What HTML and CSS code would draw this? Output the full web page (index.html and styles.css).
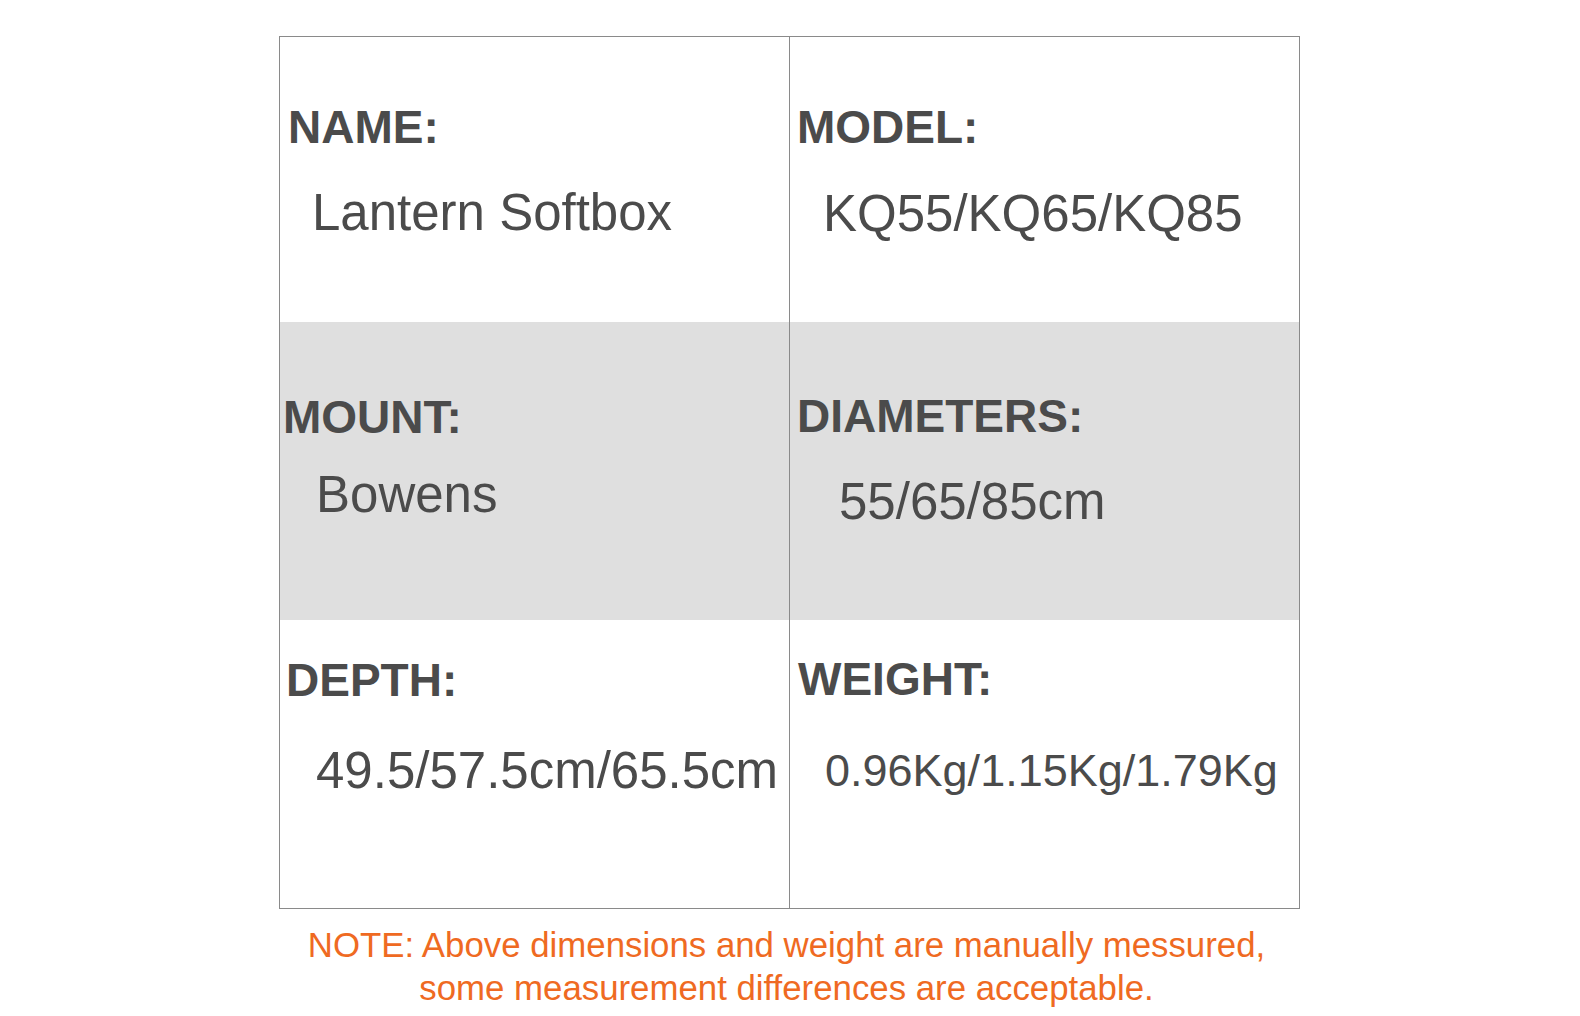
FILE: index.html
```html
<!DOCTYPE html>
<html lang="en">
<head>
<meta charset="utf-8">
<title>Lantern Softbox Specs</title>
<link rel="stylesheet" href="styles.css">
</head>
<body>
<main class="page">
  <section class="spec-table">
    <div class="row">
      <div class="cell cell-left cell-name">
        <div class="label">NAME:</div>
        <div class="value">Lantern Softbox</div>
      </div>
      <div class="cell cell-model">
        <div class="label">MODEL:</div>
        <div class="value">KQ55/KQ65/KQ85</div>
      </div>
    </div>
    <div class="row row-shaded">
      <div class="cell cell-left cell-mount">
        <div class="label">MOUNT:</div>
        <div class="value">Bowens</div>
      </div>
      <div class="cell cell-diam">
        <div class="label">DIAMETERS:</div>
        <div class="value">55/65/85cm</div>
      </div>
    </div>
    <div class="row row-last">
      <div class="cell cell-left cell-depth">
        <div class="label">DEPTH:</div>
        <div class="value">49.5/57.5cm/65.5cm</div>
      </div>
      <div class="cell cell-weight">
        <div class="label">WEIGHT:</div>
        <div class="value value-small">0.96Kg/1.15Kg/1.79Kg</div>
      </div>
    </div>
  </section>
  <p class="note">NOTE: Above dimensions and weight are manually messured,<br>some measurement differences are acceptable.</p>
</main>
</body>
</html>
```
FILE: styles.css
```css
html, body {
  margin: 0;
  padding: 0;
  background: #ffffff;
}

body {
  font-family: "Liberation Sans", Arial, sans-serif;
  color: #4b4b4b;
}

.page {
  padding-top: 36px;
  padding-left: 279px;
}

.spec-table {
  width: 1021px;
  box-sizing: border-box;
  border: 1px solid #8a8a8a;
  display: flex;
  flex-direction: column;
}

.row {
  display: grid;
  grid-template-columns: 510px 509px;
  height: 285px;
}

.row-shaded {
  background: #dfdfdf;
  height: 298px;
}

.row-last {
  height: 288px;
}

.cell {
  display: flex;
  flex-direction: column;
  align-items: flex-start;
}

.cell-left {
  border-right: 1px solid #8a8a8a;
}

.label {
  font-weight: 700;
  font-size: 46px;
  line-height: 46px;
  white-space: nowrap;
}

.value {
  font-size: 51px;
  line-height: 51px;
  white-space: nowrap;
}

.value-small {
  font-size: 45px;
  line-height: 45px;
}

/* per-cell placement */
.cell-name { padding-top: 67px; padding-left: 8px; }
.cell-name .value { margin-top: 37px; margin-left: 24px; }

.cell-model { padding-top: 67px; padding-left: 7px; }
.cell-model .value { margin-top: 38px; margin-left: 26px; }

.cell-mount { padding-top: 72px; padding-left: 3px; }
.cell-mount .value { margin-top: 29px; margin-left: 33px; }

.cell-diam { padding-top: 71px; padding-left: 7px; }
.cell-diam .value { margin-top: 37px; margin-left: 42px; }

.cell-depth { padding-top: 37px; padding-left: 6px; }
.cell-depth .value { margin-top: 42px; margin-left: 30px; }

.cell-weight { padding-top: 36px; padding-left: 8px; }
.cell-weight .value { margin-top: 46px; margin-left: 27px; }

.note {
  width: 1015px;
  margin: 14px 0 0 0;
  text-align: center;
  color: #ef6a22;
  font-size: 34.8px;
  line-height: 43px;
}
```
